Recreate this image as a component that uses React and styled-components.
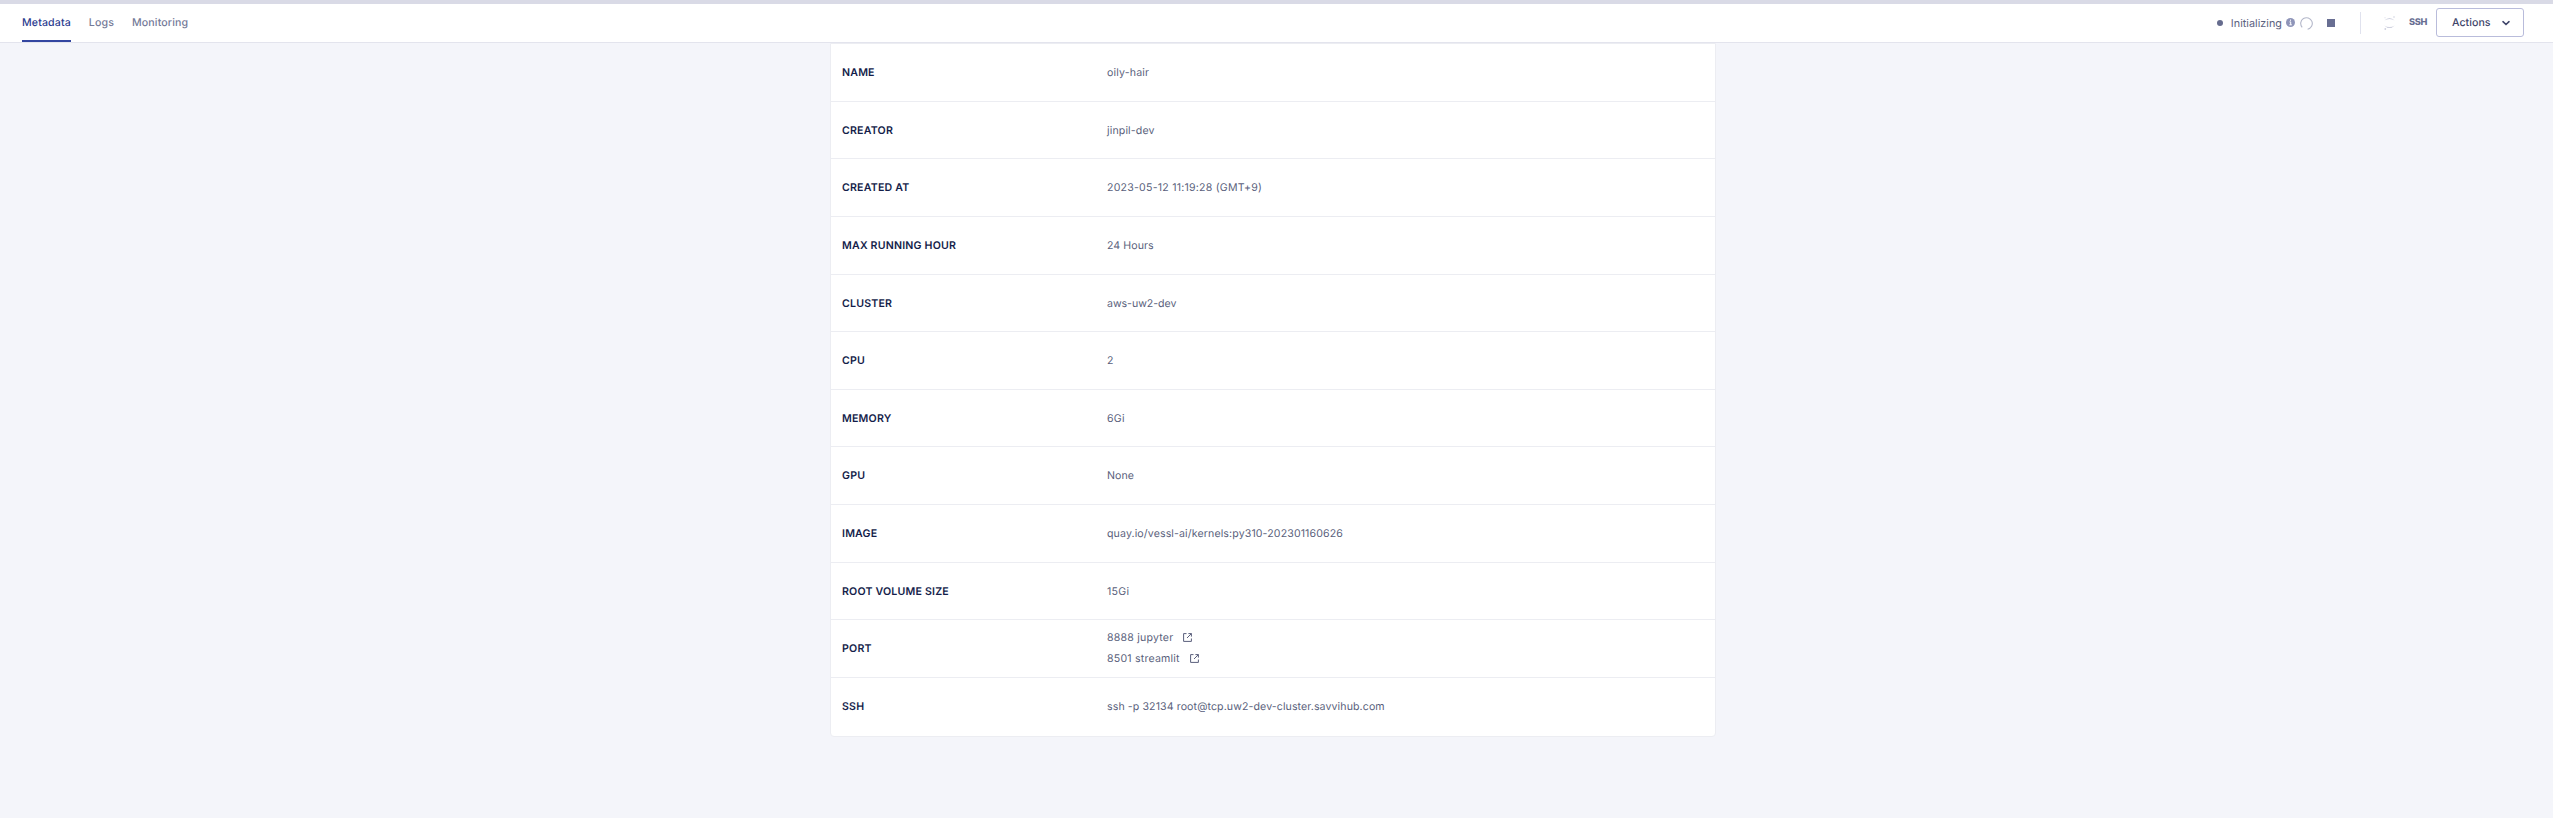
import React from "react";
import styled, { createGlobalStyle } from "styled-components";

const GlobalStyle = createGlobalStyle`
  * { box-sizing: border-box; }
  body {
    margin: 0;
    background: #f4f5fa;
    font-family: Inter, "Liberation Sans", sans-serif;
    text-rendering: geometricPrecision;
  }
`;
const Page = styled.div`
  min-height: 818px;
  display: flex;
  flex-direction: column;
  background: #f4f5fa;
`;
const TopStrip = styled.div`
  height: 4px;
  background: #d9dae6;
`;
const Header = styled.header`
  height: 39px;
  display: flex;
  justify-content: space-between;
  background: #fff;
  border-bottom: 1px solid #e3e4ed;
  padding: 0 29px 0 22px;
`;
const Tabs = styled.nav`
  display: flex;
  gap: 18px;
`;
const Tab = styled.a`
  display: flex;
  align-items: center;
  height: 38px;
  padding-top: 1px;
  font-size: 10.6px;
  font-weight: 500;
  letter-spacing: 0.13px;
  color: ${(p) => (p.$active ? "#2b3c8f" : "#747a98")};
  border-bottom: 2px solid ${(p) => (p.$active ? "#3346a0" : "transparent")};
`;
const Tools = styled.div`
  display: flex;
  align-items: center;
  height: 37px;
`;
const Dot = styled.span`
  width: 6px;
  height: 6px;
  margin-right: 8px;
  border-radius: 50%;
  background: #666c8e;
`;
const Status = styled.span`
  padding-top: 2px;
  font-size: 10.8px;
  letter-spacing: 0.02px;
  line-height: 16px;
  color: #5c617f;
`;
const Icon = styled.svg`
  display: block;
  flex: none;
  margin-left: ${(p) => p.$gap || 0}px;
  margin-top: ${(p) => p.$drop || 0}px;
`;
const Divider = styled.span`
  width: 1px;
  height: 22px;
  margin: 1px 23px 0 25px;
  background: #e0e2ee;
`;
const SshMark = styled.span`
  width: 18px;
  margin-left: 14px;
  font-size: 9.2px;
  font-weight: 800;
  line-height: 12px;
  letter-spacing: -0.3px;
  white-space: nowrap;
  color: #686e92;
`;
const ActionsButton = styled.button`
  display: flex;
  align-items: center;
  justify-content: space-between;
  width: 88px;
  height: 29px;
  margin-left: 9px;
  padding: 0 13px 0 15px;
  border: 1px solid #b9bcdb;
  border-radius: 3px;
  background: #fff;
  color: #40456a;
  font: 500 10.6px Inter, "Liberation Sans", sans-serif;
  letter-spacing: 0.04px;
  text-rendering: inherit;
`;
const Card = styled.dl`
  width: 886px;
  margin: 0 0 0 830px;
  background: #fff;
  border: 1px solid #ecedf2;
  border-radius: 0 0 4px 4px;
`;
const Row = styled.div`
  display: flex;
  align-items: center;
  height: 57.63px;
  padding: 0.4px 0 0 11px;
  border-bottom: 1px solid #ecedf2;
  &:last-child { border-bottom: 0; }
`;
const Label = styled.dt`
  width: 265px;
  font-size: 10.6px;
  font-weight: 600;
  letter-spacing: 0.2px;
  color: #141d4a;
`;
const Value = styled.dd`
  margin: 0;
  font-size: 10.6px;
  letter-spacing: ${(p) => p.$tracking ?? 0.12}px;
  color: #5a5f7c;
`;
const PortList = styled.div`
  padding-bottom: 1.6px;
`;
const Port = styled.div`
  display: flex;
  align-items: center;
  height: 21px;
`;

const OpenIcon = () => (
  <Icon $gap={10} $drop={1} width="9" height="9" viewBox="0 0 9 9" fill="none" stroke="#5a5f7c" strokeWidth="1">
    <path d="M3.5.6H.6v7.8h7.8V5.5M5.4.6h3v3M8.4.6 4 5" />
  </Icon>
);

const rows = [
  { label: "NAME", value: "oily-hair", tracking: 0.16 },
  { label: "CREATOR", value: "jinpil-dev", tracking: 0.13 },
  { label: "CREATED AT", value: "2023-05-12 11:19:28 (GMT+9)", tracking: 0.22 },
  { label: "MAX RUNNING HOUR", value: "24 Hours", tracking: 0.07 },
  { label: "CLUSTER", value: "aws-uw2-dev", tracking: -0.03 },
  { label: "CPU", value: "2" },
  { label: "MEMORY", value: "6Gi", tracking: 0.3 },
  { label: "GPU", value: "None", tracking: 0.07 },
  { label: "IMAGE", value: "quay.io/vessl-ai/kernels:py310-202301160626" },
  { label: "ROOT VOLUME SIZE", value: "15Gi", tracking: 0.3 },
  { label: "PORT", ports: ["8888 jupyter", "8501 streamlit"], tracking: 0.2 },
  { label: "SSH", value: "ssh -p 32134 root@tcp.uw2-dev-cluster.savvihub.com", tracking: 0.1 },
];

export default function App() {
  return (
    <Page>
      <GlobalStyle />
      <TopStrip />
      <Header>
        <Tabs>
          <Tab $active>Metadata</Tab>
          <Tab>Logs</Tab>
          <Tab>Monitoring</Tab>
        </Tabs>
        <Tools>
          <Dot />
          <Status>Initializing</Status>
          <Icon $gap={4} width="9" height="9" viewBox="0 0 9 9">
            <circle cx="4.5" cy="4.5" r="4.5" fill="#8f95b9" />
            <path d="M3.5 3.9h1.2v2.8M3.4 6.8h2.4M4.5 1.6v1.2" stroke="#fff" fill="none" />
          </Icon>
          <Icon $gap={5} $drop={2} width="13" height="13" viewBox="0 0 13 13" fill="none" stroke="#b3b7c9" strokeWidth="1.1">
            <path d="M2.2 10.4A5.8 5.8 0 1 1 7.6 12.2" />
          </Icon>
          <Icon $gap={14} $drop={1} width="8" height="8">
            <path d="M0 0h8v8H0z" fill="#686e92" />
          </Icon>
          <Divider />
          <Icon $drop={1} width="11" height="14" viewBox="0 0 11 14" fill="#cfd1df">
            <path d="M.3 4.6Q5.5-.8 10.7 4.6 5.5 1.6.3 4.6ZM.3 9.4Q5.5 14.8 10.7 9.4 5.5 12.4.3 9.4Z" />
            <circle cx="10" cy="1" r=".8" />
            <circle cx="1" cy="1.7" r=".5" />
            <circle cx="1.3" cy="13" r=".9" />
          </Icon>
          <SshMark>SSH</SshMark>
          <ActionsButton>
            Actions
            <svg width="8" height="6" viewBox="0 0 8 6" fill="none" stroke="#40456a" strokeWidth="1.6" strokeLinecap="round">
              <path d="m1 1.7 3 2.8 3-2.8" />
            </svg>
          </ActionsButton>
        </Tools>
      </Header>
      <Card>
        {rows.map(({ label, value, ports, tracking }) => (
          <Row key={label}>
            <Label>{label}</Label>
            <Value $tracking={tracking}>
              {ports ? (
                <PortList>
                  {ports.map((port) => (
                    <Port key={port}>
                      {port}
                      <OpenIcon />
                    </Port>
                  ))}
                </PortList>
              ) : (
                value
              )}
            </Value>
          </Row>
        ))}
      </Card>
    </Page>
  );
}
